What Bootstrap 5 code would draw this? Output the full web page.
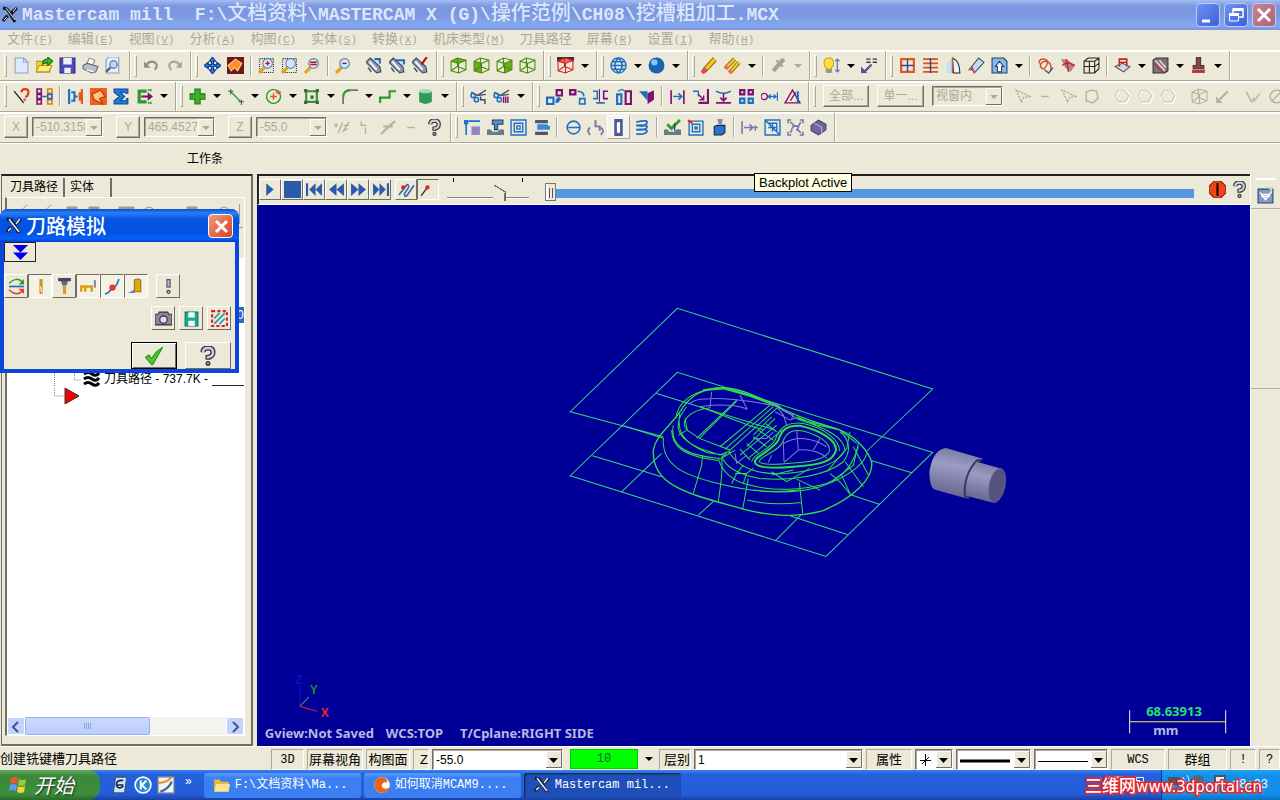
<!DOCTYPE html>
<html lang="zh-CN">
<head>
<meta charset="utf-8">
<meta name="viewport" content="width=device-width, initial-scale=1">
<title>Mastercam mill</title>
<link rel="stylesheet" href="https://cdn.jsdelivr.net/npm/bootstrap@5.3.0/dist/css/bootstrap.min.css">
<style>
:root{--face:#ece9d8;--shade:#aca899;--dim:#aca899}
body{height:100vh;min-height:640px;background:var(--face);color:#000;font:12px/16px "Liberation Sans","Noto Sans CJK SC",sans-serif;overflow:hidden}
.mono{font-family:"Liberation Mono","Noto Sans CJK SC",monospace}
button{background:none;border:0;padding:0;color:inherit;font:inherit}
.titlebar{height:30px;padding:0 4px 0 2px;background:linear-gradient(#a5bdf0 0,#7b97e0 20%,#7b97e0 50%,#85a9ee 85%,#7b92dc)}
.titlebar h1{font-size:18px;line-height:30px;color:#dbe6fc;font-weight:700;margin:0;white-space:pre}
.titlebar h1 .cjk{font-size:20px;font-weight:500}
.winbtn{width:24px;height:24px;border:1px solid #b9cdf8;border-radius:4px;background:linear-gradient(135deg,#6f92ee,#3a62dc)}
.winbtn.shut{background:linear-gradient(135deg,#c9858f,#ad6375)}
.menubar{height:20px;gap:15px;padding:0 7px;font-size:13px;line-height:20px}
.menubar a{color:var(--dim);text-decoration:none;white-space:nowrap}
.menubar .key{font-size:11px}
.toolrow{height:31px;border-top:1px solid #fff;box-shadow:inset 0 1px #fff,inset 0 -1px var(--shade);overflow:hidden}
.tgroup{flex:none;padding:0 4px 0 10px;border-right:1px solid var(--shade);box-shadow:1px 0 #fff;position:relative;height:29px}
.tgroup.grip::before{content:"";width:3px;height:22px;border:1px solid #fff;border-right-color:var(--shade);border-bottom-color:var(--shade);margin-left:-6px;margin-right:3px}
.tbtn{width:23px;height:24px;display:flex;align-items:center;justify-content:center;flex:none}
.tbtn svg{width:17px;height:17px}
.tbtn.raised{background:#f6f4ea;border:1px solid;border-color:#fff var(--shade) var(--shade) #fff}
.tarrow{width:15px;height:24px;flex:none;display:flex;align-items:center;justify-content:center}
.tarrow::before{content:"";border:4px solid transparent;border-top-color:#000;border-bottom:0}
.tarrow.off::before{border-top-color:var(--shade)}
.tsep{width:8px;height:20px;flex:none;background:linear-gradient(90deg,transparent 3px,var(--shade) 3px,var(--shade) 4px,#fff 4px,#fff 5px,transparent 5px)}
.tgap{width:8px;flex:none}
.push{border:1px solid;border-color:#fff #716f64 #716f64 #fff;box-shadow:inset -1px -1px var(--shade);height:22px;flex:none;color:var(--dim)}
.pick{appearance:none;border:1px solid;border-color:#716f64 #fff #fff #716f64;box-shadow:inset 1px 1px var(--shade);border-radius:0;height:20px;padding:0 17px 0 3px;font:inherit;line-height:16px;color:#000;background:#fff url("data:image/svg+xml,%3Csvg xmlns='http://www.w3.org/2000/svg' width='16' height='17'%3E%3Cpath fill='%23ece9d8' d='M0 0h16v17H0z'/%3E%3Cpath d='M.5 16V.5H15' fill='none' stroke='%23fff'/%3E%3Cpath d='M0 16.5h15.5V0' fill='none' stroke='%23716f64'/%3E%3Cpath d='M3 7h9l-4.5 5z'/%3E%3C/svg%3E") no-repeat right center}
.pick.off{color:var(--dim);opacity:1;background-color:var(--face);background-image:url("data:image/svg+xml,%3Csvg xmlns='http://www.w3.org/2000/svg' width='16' height='17'%3E%3Cpath fill='%23ece9d8' d='M0 0h16v17H0z'/%3E%3Cpath d='M.5 16V.5H15' fill='none' stroke='%23fff'/%3E%3Cpath d='M0 16.5h15.5V0' fill='none' stroke='%23716f64'/%3E%3Cpath fill='%23aca899' d='M4 7h8l-4 4z'/%3E%3C/svg%3E")}
.coords .pick{width:71px;text-overflow:clip}.coords .push{width:24px}.coords .next{margin-left:13px}
.workbar{height:31px;border-top:1px solid #fff;padding-left:187px;line-height:30px}
.side{width:252px;flex:none;border:1px solid #716f64;border-top:2px solid #222;margin-left:1px;padding:0 6px 8px 3px;border-right-width:2px;border-bottom-width:2px}
.side .tabbtn{height:19px;padding:0 5px;border-right:2px solid #716f64;margin-top:2px;font-size:12px}
.sidebox{border:1px solid #fff;border-left:2px solid #716f64;min-height:0}
.sidetools{height:60px}
.tree{background:#fff}
.tree ul{margin:0;padding:0;list-style:none}
.tree .picked{background:#316ac5;color:#fff;width:7px;height:16px}
.tree .oprow{height:16px;line-height:16px;white-space:nowrap}
.hbar{height:18px;background:#f4f3ee}
.hbar button{width:18px;height:18px;border:1px solid #fff;border-radius:2px;background:#c3d3fd}
.hthumb{width:125px;border:1px solid #98b0ea;border-radius:2px;background:linear-gradient(#cad9fd,#bacdfb)}
.plotbar{height:31px;border:2px solid #222;border-bottom:1px solid #fff;border-right:0}
.pbtn{width:22px;height:21px;border:1px solid;border-color:#fff #716f64 #716f64 #fff;display:flex;align-items:center;justify-content:center;flex:none}
.pbtn.down{border-color:#716f64 #fff #fff #716f64}
.pbtn svg{width:17px;height:17px}
.scene{background:#000099;min-height:0}
.tip{left:754px;top:173px;background:#ffffe1;border:1px solid #000;padding:0 4px;height:19px;line-height:17px;font-size:13px}
.range{appearance:none;background:none;margin:0}
.speed{width:82px;height:20px}
.speed::-webkit-slider-runnable-track{height:2px;background:linear-gradient(#8a8778 1px,#fff 1px);margin-top:12px}
.speed::-webkit-slider-thumb{appearance:none;width:13px;height:16px;margin-top:-12px;background:linear-gradient(54deg,transparent 0) no-repeat,linear-gradient(to top right,var(--face) 49%,#716f64 50%,#716f64 58%,transparent 59%) 0 0/100% 8px no-repeat,linear-gradient(90deg,var(--face) 11px,#716f64 11px) 0 8px/100% 8px no-repeat}
.prog{height:26px}
.prog::-webkit-slider-runnable-track{height:9px;background:#5597e3;margin-top:8px}
.prog::-webkit-slider-thumb{appearance:none;width:11px;height:18px;margin-top:-6px;border:1px solid #777;background:linear-gradient(90deg,#fff 2px,transparent 2px),linear-gradient(90deg,transparent 3px,#555 3px,#555 4px,transparent 4px,transparent 6px,#555 6px,#555 7px,transparent 7px) 0 4px/100% 10px no-repeat,var(--face)}
.strip{width:30px;flex:none;border-left:1px solid #fff}
.dlg{left:0;top:209px;width:239px;height:164px;border:4px solid #0a46d8;border-top:0;border-radius:8px 8px 0 0;background:var(--face);z-index:5}
.dlghead{height:33px;margin:0 -4px;padding:0 6px;border-radius:8px 8px 0 0;background:linear-gradient(#0a4fd0,#2a80f8 12%,#0455e3 30%,#0351e0 70%,#0660f8 90%,#003dd7)}
.dlghead h2{font:500 20px/33px "Noto Sans CJK SC",sans-serif;color:#fff;margin:0 0 0 4px}
.dclose{width:25px;height:24px;border:1px solid #fff;border-radius:4px;background:linear-gradient(135deg,#f09a80,#d8431c)}
.dbtn{width:24px;height:24px;border:1px solid;border-color:#fff #716f64 #716f64 #fff;display:flex;align-items:center;justify-content:center}
.dbtn.down{border-color:#716f64 #fff #fff #716f64;background:#f4f2e6}
.dbtn svg{width:17px;height:17px}
.dbig{width:46px;height:27px}
.dbig.go{border:1px solid #000;box-shadow:inset 1px 1px #fff,inset -1px -1px #716f64}
.dbig svg{width:20px;height:20px}
.statusbar{height:24px;gap:3px;font-size:13px;line-height:20px;border-top:1px solid #fff;padding-top:2px}
.cell{height:21px;border:1px solid;border-color:var(--shade) #fff #fff var(--shade);text-align:center;flex:none;overflow:hidden;white-space:nowrap}
.cell.tiny,.statusbar .mono{font-size:12px}
.statusbar .pick{flex:none;height:21px}
.penpick{position:relative}
.penpick svg{position:absolute;left:4px;top:4px;pointer-events:none}
.lvl{background:#0f0;border:1px solid #0c0;width:68px;height:20px;flex:none;text-align:center;line-height:18px;color:#063}
.taskbar{height:30px;background:linear-gradient(#3a81ee,#2560dc 15%,#245ddb 80%,#1941a5);color:#fff}
.start{width:100px;height:30px;border-radius:0 12px 12px 0;background:linear-gradient(#5fae5f,#3c873c 20%,#3c8f3c 80%,#2a6a2a);font:italic 20px/28px "Noto Sans CJK SC",sans-serif;text-shadow:1px 1px 2px #222}
.task{width:157px;height:25px;border-radius:3px;background:linear-gradient(#5a9af8,#3c81f3 20%,#3a7ef0);font-size:12px;padding:0 9px;gap:4px;text-align:left;white-space:nowrap;color:#fff;margin-right:3px}
.task.on{background:#1e4fb8;box-shadow:inset 1px 1px 2px #123}
.task svg,.quick svg{width:18px;height:18px;flex:none}
.tray{width:119px;background:linear-gradient(#1fa0f0,#1290e9 20%,#1190ea 80%,#0b6fc0);border-left:1px solid #0a3c94}
.stamp{right:18px;bottom:4px;font:500 17px/18px "Noto Sans CJK SC",sans-serif;color:#fff;-webkit-text-stroke:3px #e2262a;paint-order:stroke fill;white-space:nowrap;z-index:6}
.stamp .latin{font:15px/18px "DejaVu Sans",sans-serif}
</style>
</head>
<body class="d-flex flex-column position-relative">
<header class="titlebar d-flex align-items-center">
  <svg width="16" height="18" viewBox="0 0 16 18"><path d="M1 2l4 1 8 13M1 15l4-5M9 8l6-6M3 12l3-2M9 7l5-4" stroke="#151515" stroke-width="3" fill="none"/><path d="M4 2l9 12M2 14l3-3M11 6l3-4" stroke="#eee" fill="none"/></svg>
  <h1 class="mono ms-1">Mastercam mill  F:\<span class="cjk">文档资料</span>\MASTERCAM X (G)\<span class="cjk">操作范例</span>\CH08\<span class="cjk">挖槽粗加工</span>.MCX</h1>
  <div class="d-flex ms-auto gap-1">
    <button class="winbtn" aria-label="最小化"><svg width="22" height="22"><path d="M5 17h8" stroke="#fff" stroke-width="3"/></svg></button>
    <button class="winbtn" aria-label="还原"><svg width="22" height="22" fill="none" stroke="#fff"><path d="M8 9V5h10v8h-4" stroke-width="1.5"/><path d="M8 5.5h10M4 10.5h10" stroke-width="3"/><path d="M4.500 10h9v7h-9z"/></svg></button>
    <button class="winbtn shut" aria-label="关闭"><svg width="22" height="22"><path d="M5 5l12 12M17 5L5 17" stroke="#fff" stroke-width="3"/></svg></button>
  </div>
</header>
<nav class="menubar mono d-flex">
  <a href="#">文件<span class="key">(<u>F</u>)</span></a><a href="#">编辑<span class="key">(<u>E</u>)</span></a><a href="#">视图<span class="key">(<u>V</u>)</span></a><a href="#">分析<span class="key">(<u>A</u>)</span></a><a href="#">构图<span class="key">(<u>C</u>)</span></a><a href="#">实体<span class="key">(<u>S</u>)</span></a><a href="#">转换<span class="key">(<u>X</u>)</span></a><a href="#">机床类型<span class="key">(<u>M</u>)</span></a><a href="#">刀具路径</a><a href="#">屏幕<span class="key">(<u>R</u>)</span></a><a href="#">设置<span class="key">(<u>I</u>)</span></a><a href="#">帮助<span class="key">(<u>H</u>)</span></a>
</nav>
<div class="toolrow d-flex" role="toolbar">
  <div class="tgroup grip" data-tools="new open save print preview"></div>
  <div class="tgroup grip" data-tools="undo redo"></div>
  <div class="tgroup grip" data-tools="pan repaint | zoomwin zoomtarget zoomsel | zoomout . can1 can2 can3"></div>
  <div class="tgroup grip" data-tools="cubetop cubefront cubeside cubeiso"></div>
  <div class="tgroup grip" data-tools="cubered v"></div>
  <div class="tgroup grip" data-tools="globe v ball v"></div>
  <div class="tgroup grip" data-tools="eraser erasers v | erasergray w"></div>
  <div class="tgroup grip" data-tools="bulb v attrs"></div>
  <div class="tgroup grip" data-tools="gridred linesred halfarc sheet boxup v | curl1 curl2 wirecube | tray1 v hatch v brush v"></div>
</div>
<div class="toolrow d-flex" role="toolbar">
  <div class="tgroup grip" data-tools="askline chain | merge repaint2 sigma gate v"></div>
  <div class="tgroup grip" data-tools="plus v line v circ v rect v fillet v spline v cyl v"></div>
  <div class="tgroup grip" data-tools="trim1 trim2 v"></div>
  <div class="tgroup grip" data-tools="tr1 tr2 tr3 tr4 tr5 | of1 of2 of3 of4 of5 of6"></div>
  <div class="tgroup grip" data-tools="">
    <button class="push ms-1" style="width:46px" disabled>全部...</button>
    <button class="push ms-2" style="width:47px" disabled>单一...</button>
    <select class="pick off ms-2" style="width:71px" aria-label="选择方式" disabled><option>视窗内</option></select>
    <span class="ms-2 d-flex" data-tools="g1 dash g1 g2 . g3 g3 g3 . g4 g5 . g6 g7"></span>
  </div>
</div>
<div class="toolrow d-flex" role="toolbar">
  <div class="tgroup coords ps-1" data-tools="">
    <button class="push" disabled>X</button><select class="pick off ms-1" aria-label="X" disabled><option>-510.3158</option></select>
    <button class="push next" disabled>Y</button><select class="pick off ms-1" aria-label="Y" disabled><option>465.45275</option></select>
    <button class="push next" disabled>Z</button><select class="pick off ms-1" aria-label="Z" disabled><option>-55.0</option></select>
    <span class="d-flex ms-1" data-tools="c1 c2 c3 dash help"></span>
  </div>
  <div class="tgroup grip" data-tools="m1 m2 m3 m4 | m5 m6 *m7 m8 | m9 m10 m11 | m12 m13 m14 m15"></div>
</div>
<div class="workbar">工作条</div>

<main class="d-flex flex-grow-1" style="min-height:0">
  <aside class="side d-flex flex-column">
    <div class="d-flex"><button class="tabbtn">刀具路径</button><button class="tabbtn pe-3">实体</button></div>
    <div class="sidebox flex-grow-1 d-flex flex-column">
      <div class="sidetools"><svg width="236" height="50"><path d="M12 14l8-7M36 14l8-7M60 9h10v4H60zM82 9h10v4H82zM112 9h15v4h-15zM180 9h10v4h-10z" fill="#999" stroke="#999"/><path d="M136 13q6-8 12 0M211 13q6-8 12 0M232.500 6v20M0 29.500h236" stroke="#999" fill="none"/></svg></div>
      <div class="tree flex-grow-1">
        <div class="d-flex justify-content-end" style="padding-top:49px"><span class="picked">0</span></div>
        <ul style="padding-top:48px">
          <li class="oprow d-flex align-items-center"><svg width="75" height="16"><path d="M47.500 0v16M67.500 0v9h7" stroke="#888" stroke-dasharray="1 1" fill="none"/></svg><svg width="18" height="16" class="me-1"><path d="M2 3q4-3 8 0t7-1M2 8q4-3 8 0t7-1M2 13q4-3 8 0t7-1" stroke="#000" stroke-width="3" fill="none"/></svg>刀具路径 - 737.7K - <span class="flex-grow-1 border-bottom border-dark ms-1" style="height:14px"></span></li>
          <li class="oprow"><svg width="77" height="16"><path d="M47.500 0v8h10" stroke="#888" stroke-dasharray="1 1" fill="none"/><path d="M58 0l14 8-14 8z" fill="#f00000" stroke="#333"/></svg></li>
        </ul>
      </div>
      <div class="hbar d-flex"><button aria-label="左移"><svg width="12" height="12"><path d="M8 1L3 6l5 5" fill="none" stroke="#3c5690" stroke-width="2"/></svg></button><div class="hthumb d-flex justify-content-center align-items-center"><svg width="8" height="6"><path d="M.5 0v6M2.500 0v6M4.500 0v6M6.500 0v6" stroke="#8ca5e6"/></svg></div><button class="ms-auto" aria-label="右移"><svg width="12" height="12"><path d="M4 1l5 5-5 5" fill="none" stroke="#3c5690" stroke-width="2"/></svg></button></div>
    </div>
  </aside>
  <section class="flex-grow-1 d-flex flex-column ms-1" style="min-width:0">
    <div class="plotbar d-flex align-items-center">
      <div class="d-flex" id="play"></div>
      <div class="d-flex ms-1" id="modes"></div>
      <div class="d-flex flex-column ms-1 ps-1"><svg width="82" height="4"><path d="M6.500 0v4M75.500 0v4" stroke="#000"/></svg><input class="range speed" type="range" min="0" max="100" value="66" aria-label="速度"></div>
      <input class="range prog flex-grow-1 ms-3" type="range" min="0" max="100" value="0" aria-label="进度">
      <div class="d-flex ms-2 ps-1" id="stopbox"></div>
    </div>
    <div class="scene flex-grow-1">
      <svg class="d-block w-100 h-100" viewBox="258 205 991 541" preserveAspectRatio="xMidYMid meet">
        <defs>
          <linearGradient id="steel" x1=".6" y1="0" x2=".4" y2="1"><stop offset="0" stop-color="#77769f"/><stop offset=".35" stop-color="#9c9bc2"/><stop offset="1" stop-color="#62618d"/></linearGradient>
        </defs>
        <g transform="translate(560 295) scale(.33333)" fill="none" stroke="#35d975" stroke-width="3">
          <path d="M310 425L31 350 352 40 1118 282 918 470"/>
          <path d="M352 232L31 542 798 784 1118 472zM290 295L645 405M190 392l122 38M98 482l207 63M935 497l120 36M870 598l90 30M690 662l172 56M185 590L305 475M415 660l47-43M645 738l77-78M410 430L530 315"/>
          <g stroke="none"><path d="M1158 459L1268 491Q1204 540 1226 612L1125 584Q1108 578 1108 530Q1118 464 1158 459z" fill="url(#steel)"/><path d="M1250 492l18 0q-50 50-42 118l-14 0q-8-70 38-118z" fill="#3a396a"/><path d="M1250 500L1322 520 1296 622 1218 602Q1212 545 1250 500z" fill="url(#steel)"/><ellipse cx="1311" cy="571" rx="24" ry="52" transform="rotate(12 1311 571)" fill="#55537e" stroke="#6f6e99" stroke-width="2"/></g>
        </g>
        <g transform="translate(640 375) scale(.33333)" fill="none" stroke="#2ee04e" stroke-width="3">
          <path stroke-width="4" d="M40 225C35 335 150 357 310 402C400 426 470 426 545 408C640 370 700 310 695 262C685 225 640 180 600 165C540 145 480 130 415 95C370 75 310 40 250 38C190 38 150 60 120 110C90 155 48 180 40 225"/>
          <path stroke-width="6" d="M190 45L250 40 330 62 412 92 422 100M345 262C340 245 400 225 415 195C425 165 440 150 480 152C540 165 590 195 588 225C580 260 540 270 460 275C400 280 350 280 345 262"/>
          <path d="M70 190C65 270 130 300 235 325C340 352 450 360 540 335C640 300 675 260 680 235M100 150C90 210 130 240 240 250M108 130C112 80 160 50 210 43M95 165C95 220 140 245 235 256M140 95C95 150 110 190 180 220L240 240 270 228M210 98C150 105 115 140 142 165L178 190 270 225 412 98M255 222L400 95M240 215L390 90M120 115C110 165 125 200 200 232L250 240M178 190L290 78M135 130L142 165 115 180M180 95L330 152M330 152L370 165"/>
          <path d="M235 250C245 290 280 320 330 330C400 350 490 345 560 325C620 300 640 260 655 215M245 245C260 280 300 300 360 310C460 320 560 300 610 260C640 220 620 185 600 170M270 235C300 280 360 300 440 295C540 285 600 260 615 225C610 185 560 160 480 135L420 100M335 260C340 235 390 225 405 195C420 150 450 140 490 145C560 160 600 200 598 228M357 260C362 240 420 228 428 200C442 165 465 163 490 168C540 182 572 205 568 228C560 248 520 262 460 264C400 270 366 270 357 260"/>
          <path d="M188 240L185 270 160 355M245 252C250 290 240 340 235 380M325 310L308 402M478 322L488 415M322 375C370 388 430 388 485 382M340 345C380 350 430 350 478 345M540 345L470 312M605 300L632 360M632 360C610 330 590 310 570 295M615 260L670 335M640 215L685 300M630 170L620 220 560 290M655 205L640 270 575 320M285 295L320 295M275 325L290 295 310 270M310 325L320 295 340 280M470 125L530 150 600 165 650 205M470 130L590 160M395 300L460 285M395 290L440 320 510 280M260 232L245 248 285 225 240 252M270 230L262 240M400 90L420 98 412 88"/>
          <path d="M340 180L395 125M320 215L405 130M300 240L410 150M325 250L425 165M355 165L400 195M340 185L380 215M320 205L355 235M375 145L410 170M300 222L330 255"/>
          <path stroke="#8278e0" d="M150 85Q170 70 200 72C250 65 350 80 415 95M215 50L210 98M300 60L322 103M180 95C230 85 300 90 322 103M425 105L460 120 455 130M285 235L290 265 320 240M430 200L432 260M475 225L470 165M432 205C470 180 520 190 560 215M475 225C510 220 550 235 560 250M475 225L432 262M385 262L395 240M540 190L520 225M410 95L430 120 440 150M405 110L450 135 470 128M340 190L380 190 400 170"/>
        </g>
        <path d="M300 706V684" stroke="#1414c8"/><path d="M300 706l9-9" stroke="#489c60"/><path d="M300 706l17 5" stroke="#e02020"/>
        <g font-family="Liberation Sans,sans-serif" font-weight="700" font-size="12"><text x="295" y="684" fill="#1010c0">Z</text><text x="310" y="694" fill="#109030">Y</text><text x="321" y="717" fill="#f02028">X</text></g>
        <g font-family="Noto Sans,sans-serif" font-weight="700" font-size="13" fill="#b9b9e0"><text x="265" y="738">Gview:Not Saved</text><text x="386" y="738">WCS:TOP</text><text x="460" y="738">T/Cplane:RIGHT SIDE</text><text x="1153" y="735">mm</text><text x="1146" y="716" fill="#22e070">68.63913</text></g>
        <path d="M1129.500 710v23M1225.500 710v23" stroke="#eee" fill="none"/><path d="M1130 721.500h95" stroke="#f4f430"/>
      </svg>
    </div>
  </section>
  <aside class="strip d-flex flex-column align-items-center">
    <hr class="w-75 m-0 mt-1 border-2 border-white opacity-100">
    <div data-tools="cam" class="mt-1"></div>
    <div class="flex-grow-1 w-100 d-flex flex-column"><hr class="w-100 m-0" style="margin-top:36%"><span class="flex-grow-1"></span><hr class="w-100 m-0"><span style="flex-grow:2"></span></div>
  </aside>
</main>

<footer class="statusbar d-flex">
  <span class="flex-grow-1">创建铣键槽刀具路径</span>
  <span class="cell tiny mono" style="width:33px">3D</span><span class="cell" style="width:56px">屏幕视角</span><span class="cell" style="width:44px">构图面</span>
  <span class="cell text-end" style="width:16px">Z</span>
  <select class="pick mono" style="width:131px" aria-label="Z"><option>-55.0</option></select>
  <span class="lvl mono ms-1">10</span><button class="tarrow" style="height:20px" aria-label="颜色"></button>
  <span class="cell text-end" style="width:32px">层别</span>
  <select class="pick mono" style="width:169px" aria-label="层别"><option>1</option></select>
  <button class="cell" style="width:46px">属性</button>
  <span class="penpick"><select class="pick" style="width:38px" aria-label="点型"><option></option></select><svg width="14" height="14"><path d="M6.500 1v12M1 7.500h11M3 11l7-7" stroke="#000"/></svg></span>
  <span class="penpick"><select class="pick" style="width:75px" aria-label="线型"><option></option></select><svg width="50" height="14"><path d="M0 8h50" stroke="#000" stroke-width="3"/></svg></span>
  <span class="penpick"><select class="pick" style="width:74px" aria-label="线宽"><option></option></select><svg width="50" height="14"><path d="M0 8.500h50" stroke="#000"/></svg></span>
  <button class="cell tiny mono" style="width:54px">WCS</button><button class="cell" style="width:59px">群组</button><button class="cell mono" style="width:26px">!</button><button class="cell mono" style="width:21px">?</button>
</footer>
<div class="taskbar d-flex align-items-center">
  <button class="start d-flex align-items-center ps-2 gap-1"><svg width="22" height="20"><path d="M3 3q4-2 7 0L9 9q-3-2-7 0z" fill="#f0552a"/><path d="M11 4q4 2 7 0l-1 6q-3 2-7 0z" fill="#8fd03c"/><path d="M2 10q4-2 7 0l-1 6q-3-2-7 0z" fill="#5a9cf8"/><path d="M10 11q4 2 7 0l-1 6q-3 2-7 0z" fill="#fbd13a"/></svg>开始</button>
  <div class="quick d-flex align-items-center ps-2" id="quick"></div>
  <button class="task d-flex align-items-center mono ms-2"><svg viewBox="0 0 16 16"><path d="M1 3h5l1 2h7v8H1z" fill="#e8b93a"/><path d="M3 7h12l-1 7H1z" fill="#fbe58e"/></svg>F:\文档资料\Ma...</button>
  <button class="task d-flex align-items-center mono"><svg viewBox="0 0 16 16"><circle cx="8" cy="8" r="7" fill="#fff"/><path d="M8 1a7 7 0 1 0 7 8c-3 4-8 2-7-1 1-4 5-2 5-2s0-5-5-5z" fill="#e8641c"/></svg>如何取消MCAM9....</button>
  <button class="task on d-flex align-items-center mono"><svg viewBox="0 0 16 18"><path d="M1 2l4 1 8 13M1 15l4-5M9 8l6-6" stroke="#151515" stroke-width="3" fill="none"/><path d="M3 2l10 13M2 14l3-3M10 7l4-5" stroke="#eee" stroke-width="1.5" fill="none"/></svg>Mastercam mil...</button>
  <svg class="ms-auto me-2" width="46" height="22"><path d="M2 3h14v10H2z" fill="#e8641c" stroke="#fff"/><path d="M29.500 3.500h7v4h-7zM26.500 6.500h6v4h-6z" fill="#2560dc" stroke="#fff"/></svg>
  <div class="tray align-self-stretch d-flex align-items-center mono"><svg width="66" height="20" class="me-1"><path d="M6 2h12v8H6zM52 0h12v10H52z" fill="#456"/><circle cx="36" cy="6" r="6" fill="#567"/><path d="M54 2h8v6h-8z" fill="#eef"/><path d="M21 2q3 4 0 8M25 0q4 6 0 12" stroke="#dde" fill="none"/></svg>18:03</div>
</div>
<div class="dlg position-absolute" role="dialog" aria-label="刀路模拟">
  <div class="dlghead d-flex align-items-center"><svg width="16" height="18" viewBox="0 0 16 18"><path d="M1 2l4 1 8 13M1 15l4-5M9 8l6-6" stroke="#111" stroke-width="3" fill="none"/><path d="M3 2l10 13M2 14l3-3M10 7l4-5" stroke="#eee" stroke-width="1.500" fill="none"/></svg><h2>刀路模拟</h2><button class="dclose ms-auto" aria-label="关闭"><svg width="22" height="22"><path d="M6 6l11 11M17 6L6 17" stroke="#fff" stroke-width="3"/></svg></button></div>
  <button class="dbtn border-dark" style="width:32px;height:20px" aria-label="展开"><svg viewBox="0 0 18 18"><path d="M1 1h16L9 9zM1 9h16l-8 8z" fill="#0000f0"/></svg></button>
  <div class="d-flex mt-2 pt-1" id="dview"></div>
  <div class="d-flex justify-content-end gap-1 mt-2 pe-1" id="dfile"></div>
  <div class="d-flex justify-content-end gap-2 mt-2 pe-1 pt-1">
    <button class="dbtn dbig go" aria-label="确定"><svg viewBox="0 0 16 16"><path d="M1 9l3-2 2 3Q9 4 15 1L7 15H6z" fill="#4c2" stroke="#171" stroke-width=".7"/></svg></button>
    <button class="dbtn dbig" aria-label="帮助" id="dhelp"></button>
  </div>
</div>
<div class="tip position-absolute">Backplot Active</div>
<div class="stamp position-absolute">三维网<span class="latin">www.3dportal.cn</span></div>

<script>
// Icon bodies on a 16 x 16 grid.
const L=(d,c,w=1.3)=>`<path d="${d}" fill="none" stroke="${c}" stroke-width="${w}"/>`;
const F=(d,c,s='none')=>`<path d="${d}" fill="${c}" stroke="${s}"/>`;
const B='#1b6fc4',V='#7b1171',G='#2a9a2a',S='#6f78b4',D='#b4b1a2',W='#4a8a10';
const lens=(m,x='')=>x+L('M1 15l5-5','#e8a020',3)+`<circle cx="9" cy="6" r="4.500" fill="#cfe8fb" stroke="#557fae"/>`+m;
const can=c=>F('M0 5l4-4 9 8 1 5-4 1z','#8c97ae','#3b4860')+L('M3 4l7 8','#eef2f8',2)+L('M5 14l-3-4','#3b4860')+L(c,B,2);
const cube=(f)=>f+L('M1 4l6-3 8 2v9l-7 3-7-2zM1 4l7 2 7-3M8 6v9M1 13l6-4V1M7 9l8 3',W,1);
const cutter=L('M1 4l6 3 8-5M7 7l8-1','#556',1.4)+'<circle cx="3" cy="7" r="2" fill="none" stroke="#1b6fc4" stroke-width="1.500"/><circle cx="6" cy="11" r="2" fill="none" stroke="#1b6fc4" stroke-width="1.500"/>';
const I={
new:F('M2 1h8l4 4v10H2z','#dcebff','#8aa4cc')+F('M10 1v4h4z','#fff','#8aa4cc'),
open:F('M0 4h6l1 2h6v8H0z','#f5cf3c','#a98512')+F('M3 8h12l-3 6H0z','#ffe97a','#b8941c')+F('M6 7q0-5 5-5V0l5 4-5 4V5q-3 0-5 2z','#3cb52a','#1a7a12'),
save:F('M1 1h14v14H1z','#4a4ab8','#27277a')+F('M4 1h8v6H4zM5 10h6v5H5z','#eef'),
print:F('M4 7l3-6 5 2-2 5','#fff','#889')+F('M1 8l4-2 10 3-2 5-4 1-8-4z','#b9c0cc','#5b6372')+F('M4 12l7 2','#fff','#fff'),
preview:F('M3 0h10v15H1V3z','#e3f0ff','#7d9cc8')+`<circle cx="8" cy="7" r="3.500" fill="#b8dcf8" stroke="#557"/>`+L('M5 10l-4 4','#557',2),
undo:L('M3 8q3-5 8-3 4 3 0 7','#8f8d84',2)+F('M1 4v6h6z','#8f8d84'),redo:L('M13 8q-3-5-8-3-4 3 0 7','#aaa79a',2)+F('M15 4v6H9z','#aaa79a'),
pan:F('M8 0l3 4H9v3h3V5l4 3-4 3V9H9v3h2l-3 4-3-4h2V9H4v2L0 8l4-3v2h3V4H5z','#2a7ae0','#0a3c90'),
repaint:F('M0 0h16v16H0z','#6b1a18')+F('M1 8l7-6 6 4-4 7-3-3-3 3z','#ff8b2a','#ffd080'),
repaint2:F('M0 0h16v16H0z','#f0601c')+F('M2 6l8-4 4 6-5 2 3 5-8-4z','#ffc080','#b43008'),
zoomwin:lens(L('M7 6h4M9 4v4','#d00'),L('M1.500 1.500h13v13h-13z','#223',1).replace('/>',' stroke-dasharray="1 1"/>')),zoomtarget:lens('',L('M1.500 1.500h13v13h-13z','#223',1).replace('/>',' stroke-dasharray="1 1"/>')),zoomsel:lens(L('M6 5h6M6 7h6','#d00')),zoomout:lens(L('M7 6h4','#d00')),
can1:can('M8 2h5v4'),can2:can('M6 3h8v4'),can3:can('M9 7l5-7').replace(B,'#c00'),
cubetop:cube(F('M1 4l6-3 8 2-7 3z','#6fae1a')),cubefront:cube(F('M1 4l7 2v9l-7-2z','#6fae1a')),cubeside:cube(F('M8 6l7-3v9l-7 3z','#6fae1a')),cubeiso:cube(''),cubered:F('M0 0h16v4H0z','#333')+cube(F('M1 4l6-3 8 2-7 3z','#f66')).replaceAll(W,'#c22'),
globe:L('M8 1a7 7 0 1 0 .1 0zM8 1q-7 7 0 14M8 1q7 7 0 14M1 8h14M2 4.500h12M2 11.500h12',B),
ball:'<circle cx="8" cy="8" r="7.500" fill="#1a64b4"/><circle cx="6" cy="5" r="3" fill="#8cc4f4"/>',
eraser:L('M3 13L13 2','#8a6a00',5)+L('M3 13L13 2','#f4c820',3)+L('M1 15l4-4','#e44',4),
erasers:L('M2 10l8-8M6 14l8-9','#9a7a00',4)+L('M2 10l8-8M6 14l8-9','#f4c820',2)+L('M1 11l2-2M5 15l2-2','#e66',4),
erasergray:L('M3 13L13 2','#a5a296',4)+L('M6 3l6 6','#a5a296',2),
bulb:F('M1 6q0-5 4.500-5T10 6q0 2-2 4v4H3v-4Q1 8 1 6z','#ffe040','#d0a020')+F('M3 11h5v4H3z','#998')+L('M13.500 2v12M11.500 4l2-2 2 2M11.500 12l2 2 2-2',S),
attrs:L('M5 2h4M11 2h4M5 5h4M11 5h4','#334')+L('M10 7l-7 7','#55509a',2)+F('M0 15V9l6 6z','#55509a'),
gridred:L('M2 1v14M14 1v14M1 2h14M1 14h14','#e8561c',2)+L('M8 2v12M2 8h12','#348'),
linesred:L('M1 2h14M1 6h14M1 10h14M1 14h14','#d8502a',1.5)+L('M8 1v14','#345'),
halfarc:F('M1 15Q1 4 7 1v14z','#bfe4fa')+F('M7 1q7 3 7 14H8z','#e8f4fc','#222')+L('M7 1v14','#e85020'),
sheet:F('M1 12L10 1l5 4-9 10-2-3z','#c8d8f0','#356')+L('M1 12l3-2 2 5','#e04020'),
boxup:F('M1 1h11l3 3v11H1z','#88b8ea','#246')+F('M8 4l4 5h-2v5H6V9H4z','#fff','#246'),
curl1:L('M2 6q0-5 5-4t2 6-5 2 1-5 6 0 2 8',"#d34a2a")+L('M7 12l4 3 4-5','#457'),curl2:F('M1 2h5l8 6-4 6-5-4z','#a88')+L('M2 8l5-3 7 3M6 2l2 12','#c22'),
wirecube:L('M1 4l4-3h10v10l-4 4H1zM1 4h10v11M11 4l4-3M1 9h10l4-3M6 4v11','#222',1),
tray1:F('M1 9l7-3 7 3-6 5z','#cdd8e4','#555')+L('M5 9V2h7v7','#c22',1.5)+L('M5 5h7','#c22'),hatch:F('M1 3l3-2h11v12l-3 2H1z','#777','#333')+L('M3 3l9 10M7 3l6 7','#fcc',1.5)+L('M2 6l8 8','#c22'),brush:F('M6 0h4v8h3v3H3V8h3z','#844','#433')+F('M2 12h12v3H2z','#b33'),
askline:L('M1 3l9 11','#222')+L('M8 4q0-3 3.500-3t3 3.500-3 4M11 10v2','#e03a10',2),
chain:L('M1 1h4v4H1zM1 6h4v4H1zM1 11h4v4H1z',V,1.5)+L('M11 1h4v4h-4zM11 11h4v4h-4z','#e07a10',1.5)+L('M11 6h4v4h-4zM6 8h4','#2a60b0',1.5),
merge:L('M2 1v14M4 4h3v8H4M7 8h3',B,2)+L('M14 1v14M12 4v8','#e85020',2),sigma:F('M1 1h13v4h-2l-1-1H7l4 4-4 4h5l1-2h1v5H1v-3l5-4-5-4z','#1f7ad8','#0e4a94'),
gate:L('M10 3H3v10h7',G,3)+L('M5 8h9',V,2)+F('M11 4l5 4-5 4z',V)+L('M12 1v2M14 1v2M12 13v2M14 13v2',G),
plus:F('M5.500 1h5v4.500H15v5h-4.500V15h-5v-4.500H1v-5h4.500z','#3fae2a','#1c7a12'),line:L('M4 4l9 9',G)+L('M1 3h5M3.500 1v5M11 13h5M13.500 11v5','#555',1),
circ:L('M8 1.500a6.500 6.500 0 1 0 .1 0',G)+L('M5 8h6M8 5v6M10 4h5M12.500 2v4','#e85020'),rect:L('M3 3h10v10H3z',G,2)+F('M1 1h3v3H1zM12 1h3v3h-3zM1 12h3v3H1zM12 12h3v3h-3zM7 7h3v3H7z','#555'),
fillet:L('M2 15V9','#555')+L('M2 9q0-7 7-7',G,2)+L('M9 2h7','#555'),spline:L('M1 14V9h9V3h6',G,2),cyl:F('M2 3v10q6 4 12 0V3z','#2f9a5a')+'<ellipse cx="8" cy="3" rx="6" ry="2" fill="#9adcb4"/>',
trim1:cutter+L('M10 8v3h4v4','#446'),trim2:cutter+L('M10 8v6M12 8v6M14 8v6',V),
tr1:L('M1 9h6v6H1z',B,2)+L('M10 2h5v5h-5z',V,2)+F('M9 14q4 0 4-3h2l-3-3-3 3z',B),tr2:L('M1 2h5v4H1z',V,2)+L('M8 3q6 0 6 5M10 10h5v5h-5z',B,1.5),tr3:L('M1 3h4v7H1M4 14h8',B,1.5)+L('M7 1v12',V,1)+L('M15 3h-4v7h4',V,1.5),tr4:L('M2 6h4v9H2z',B,2)+L('M10 3h5v12h-5z',V,2)+L('M3 3q4-3 6 0',B),tr5:F('M1 3h8v9z',B)+F('M9 5l6-3v9l-6 4z',V),
of1:L('M2 2v13M14 2v13',V,1.5)+L('M4 8h8M9 5l3 3-3 3',B,1.5),of2:L('M15 1v13H6',V,2)+L('M1 3h5v5',B)+L('M6 6l5 5M11 7v4H7',V),of3:L('M1 3q7 4 14 0',B)+L('M8 5v6M5 9l3 3 3-3M1 14h14',V,1.5),of4:L('M2 2h4v4H2zM10 2h4v4h-4z',V,2)+L('M2 10h4v4H2zM10 10h4v4h-4z',B,2),of5:L('M3 5a3 3 0 1 0 .1 0',V,1.2)+L('M7 8h7M9 6L7 8l2 2M12 6l2 2-2 2M15.500 4v8',B),of6:L('M1 14L8 2l7 12zM6 12l5-8',V)+L('M13 3v11',B,2),
g1:L('M2 2l5 11 2-4 6-1z',D).replace('/>',' stroke-dasharray="2 1"/>'),g2:L('M3 4l4-2 6 1 1 7-5 4-6-2z',D),g3:L('M5 2h6l4 5-3 7H5L1 9z','#fff',1.5)+L('M4 2h6l4 5-3 6H4L1 8z',D,.8),g4:cube('').replaceAll(W,D),g5:L('M13 3L5 11',D,2)+F('M2 8v6h6z',D),g6:L('M1 3l5 10 3-4M8 13l6-8',D),g7:L('M8 2a6 6 0 1 0 .1 0M4 12l8-8',D),
c1:L('M0 6h4M2 4v4M8 3L4 13M14 3l-5 8 4-2M9 6h5',D),c2:L('M4 2v4h5M8 8v6',D),c3:L('M1 14L14 2M3 7h9',D,2),dash:L('M4 8h7',D),
help:L('M4 5q0-3.500 4-3.500t4 3.500-4 4v2','#333',4)+L('M4 5q0-3.500 4-3.500t4 3.500-4 4v1','#c8cede',2)+'<circle cx="8" cy="14" r="1.500" fill="#99a" stroke="#333"/>',
m1:L('M2 15V4M4 2h11',B,1.5)+F('M7 7h8v8H7z','#8d88c4')+F('M0 1h4v4H0z',B),m2:F('M0 10q4-1 5 2h5q1-3 6-2v5H0z','#6e7a88')+F('M5 1h10v4H10v5H7V5H5z','#5a8ad8','#245'),m3:L('M1 1h14v14H1zM4 4h8v8H4zM6.500 6.500h3v3h-3z',B),m4:F('M2 1h12v3H2zM2 12h12v3H2z','#556')+F('M4 5h9l3 2v3H4z','#3a8ad8'),
m5:L('M9 2a6 6 0 1 0 0 12 6 6 0 0 0 0-12M4 8h11',B,1.5),m6:L('M8 1v6h4v4M3 8q-4 3 0 7M13 8q4 3 0 7','#7278a0',1.7),m7:F('M4 0h8v16H4z','#4a5a98')+L('M8 3v10','#fff',3),m8:L('M3 3q12-3 10 1T3 6q12-1 10 2T3 10q12-1 10 2T3 14',B,1.6),
m9:F('M0 10q4-1 5 2h5q1-3 6-2v5H0z','#6e7a88')+L('M3 5l4 4 8-8',G,2.5)+L('M10 4v7','#345'),m10:L('M2 2h13v13H2zM5 5h7v7H5zM7.500 7.500h2v2h-2z',B)+L('M1 1l4 3','#e22',2),m11:F('M4 7l3-1h7v7l-3 2H4z','#2a72d0','#124')+F('M7 0h5l-1 5H8z','#88a'),
m12:L('M1 2v12M3 8h7M8 5l3 3-3 3',S,1.5)+L('M11 8h5M13.500 6v5',S),m13:L('M1 1h14v14H1zM1 1l14 14M4 4h8v8M4 8h8M8 4v8',B),m14:L('M1 4V1h3M12 1h3v3M15 12v3h-3M4 15H1v-3M5 6l6 1-2 4M4 10l3-4M3 3l3 2M13 3l-2 3M13 13l-3-3M3 13l2-3',S,1.5),m15:F('M1 6l7-5 7 4v5l-7 5-7-4z','#6a679c','#43406e')+L('M4 4l7 4v6','#a9a6d6'),
cam:F('M1 2h14v13H1z','#7f9cc0','#346')+L('M3 5l5 7 6-8M5 7h6M4 9h8','#fff')+F('M9 0h6l-1 4z','#ccd'),
play:F('M4 2l7 6-7 6z','#2a5caa'),stop:F('M0 0h16v16H0z','#2a5caa'),first:F('M0 2h2v12H0zM9 2v12L3 8zM15 2v12L9 8z','#2a5caa'),rew:F('M8 2v12L1 8zM15 2v12L8 8z','#2a5caa'),ff:F('M1 2v12l7-6zM8 2v12l7-6z','#2a5caa'),last:F('M14 2h2v12h-2zM1 2v12l6-6zM7 2v12l6-6z','#2a5caa'),
path1:L('M1 13l7-9q2-2 2 2l-4 6q0 4 3 1l6-9','#356aa8',1.5)+'<circle cx="5" cy="6" r="2" fill="#d22"/>',pin:L('M1 14l6-8','#333')+'<circle cx="7" cy="6" r="2" fill="#d22"/>',
halt:F('M5 0h6l5 5v6l-5 5H5l-5-5V5z','#e8481c','#902008')+F('M7 2h2v12H7z','#200'),
d1:L('M1 5q7-7 13-1',G)+F('M15 1v5h-5z',G)+L('M1 8h14',B,1.6)+L('M1 11q7 7 13 1','#e33')+F('M15 15v-5h-5z','#e33'),d2:L('M8.500 1v14','#c8961c',3)+L('M8 8l1 5','#fff',1),d3:F('M4 1h8l-2 6H6z','#668')+F('M2 0h12v3H2z','#446')+L('M8 7v8','#d8a020',3),d4:L('M1 13V8h10v5M5 8v5',"#d8a010",2.5)+L('M14 2v7','#889',2),d5:L('M1 15q4-1 6-5 5-1 7-9',B,1.5)+'<circle cx="8" cy="9" r="3" fill="#e33"/>',d6:F('M6 2q3-2 6 0v11H6z','#e0a818','#96700c')+F('M0 14l6-3v3z','#77a'),d7:L('M8 1v8','#445',4)+L('M8 2v6','#bbc',2)+'<circle cx="8" cy="13" r="1.500" fill="#ccd" stroke="#333"/>',
shot:F('M0 4h3l1-2h8l1 2h3v10H0z','#889','#333')+'<circle cx="8" cy="9" r="3.500" fill="#dde" stroke="#223"/>',disk:F('M2 2h12v13H2z','#1fa88a','#0c6c58')+F('M5 2h6v5H5zM5 10h6v5H5z','#eff'),frame:L('M1 1h14v14H1z','#d22',2).replace('/>',' stroke-dasharray="3 2"/>')+L('M3 8l5-5M3 13L13 3M8 13l5-5','#29a',1.5),
q1:F('M4 1h10l-2 14H2z','#cde6f6','#357')+L('M11 4q-7-1-6 5 2 3 6 0M5 8h6','#125',1.5),q2:'<circle cx="8" cy="8" r="7" fill="#2488d0" stroke="#fff" stroke-width="1.500"/>'+L('M6 4v8M11 4L7 8l4 4','#fff',1.7),q3:F('M1 1h14v14H1z','#f4f4ee','#999')+L('M1 6q8 0 12-5','#e09030',2)+L('M3 14q8-3 10-9','#36a',2)
};
const svg=n=>`<svg viewBox="0 0 16 16" aria-hidden="true">${I[n]}</svg>`;
const part={'|':'<i class="tsep"></i>','.':'<i class="tgap"></i>',v:'<button class="tarrow" aria-label="更多"></button>',w:'<button class="tarrow off" aria-label="更多" disabled></button>'};
document.querySelectorAll('[data-tools]').forEach(el=>{
  el.classList.add('d-flex','align-items-center');
  el.insertAdjacentHTML('beforeend',el.dataset.tools.split(' ').filter(Boolean).map(t=>part[t]||`<button class="tbtn${t[0]==='*'?' raised':''}" aria-label="${t.replace('*','')}">${svg(t.replace('*',''))}</button>`).join(''));
});
const fill=(id,names,cls)=>{document.getElementById(id).innerHTML=names.split(' ').map(t=>`<button class="${cls}${t[0]==='*'?' down':''}" aria-label="${t.replace('*','')}">${svg(t.replace('*',''))}</button>`).join('')};
fill('play','play stop first rew ff last','pbtn');
fill('modes','path1 *pin','pbtn');
fill('stopbox','halt help','pbtn border-0');
fill('dview','d1 *d2 d3 *d4 *d5 *d6 d7','dbtn');
document.getElementById('dview').lastElementChild.classList.add('ms-2');
fill('dfile','shot disk frame','dbtn');
fill('quick','q1 q2 q3','tbtn');
document.getElementById('quick').insertAdjacentHTML('beforeend','<span class="ps-2 pb-2 pe-1">»</span>');
document.getElementById('dhelp').innerHTML=svg('help');
</script>
<script src="https://cdn.jsdelivr.net/npm/bootstrap@5.3.0/dist/js/bootstrap.bundle.min.js"></script>
</body>
</html>
